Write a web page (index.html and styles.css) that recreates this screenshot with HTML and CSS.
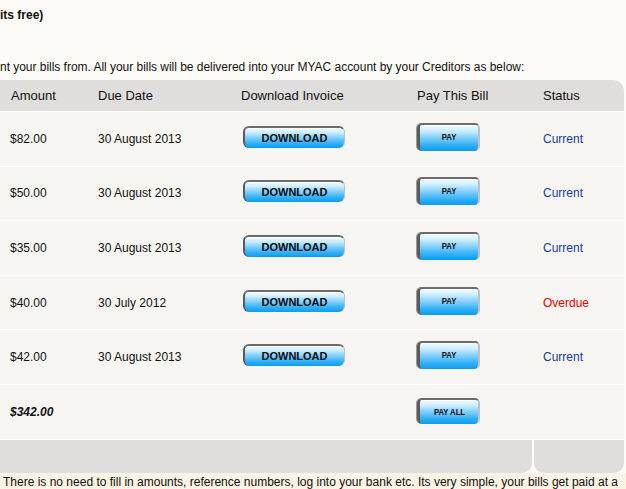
FILE: index.html
```html
<!DOCTYPE html>
<html lang="en">
<head>
<meta charset="utf-8">
<title>MYAC – Your Bills</title>
<link rel="stylesheet" href="styles.css">
</head>
<body>
<div class="panel">
  <p class="title">its free)</p>
  <p class="intro">nt your bills from. All your bills will be delivered into your MYAC account by your Creditors as below:</p>

  <div class="bills">
    <div class="row head">
      <div class="cell c-amount">Amount</div>
      <div class="cell">Due Date</div>
      <div class="cell c-dl">Download Invoice</div>
      <div class="cell">Pay This Bill</div>
      <div class="cell">Status</div>
    </div>

    <div class="row">
      <div class="cell">$82.00</div>
      <div class="cell">30 August 2013</div>
      <div class="cell"><button class="btn btn-dl">DOWNLOAD</button></div>
      <div class="cell"><button class="btn btn-pay"><span>PAY</span></button></div>
      <div class="cell status current">Current</div>
    </div>

    <div class="row">
      <div class="cell">$50.00</div>
      <div class="cell">30 August 2013</div>
      <div class="cell"><button class="btn btn-dl">DOWNLOAD</button></div>
      <div class="cell"><button class="btn btn-pay"><span>PAY</span></button></div>
      <div class="cell status current">Current</div>
    </div>

    <div class="row">
      <div class="cell">$35.00</div>
      <div class="cell">30 August 2013</div>
      <div class="cell"><button class="btn btn-dl">DOWNLOAD</button></div>
      <div class="cell"><button class="btn btn-pay"><span>PAY</span></button></div>
      <div class="cell status current">Current</div>
    </div>

    <div class="row">
      <div class="cell">$40.00</div>
      <div class="cell">30 July 2012</div>
      <div class="cell"><button class="btn btn-dl">DOWNLOAD</button></div>
      <div class="cell"><button class="btn btn-pay"><span>PAY</span></button></div>
      <div class="cell status overdue">Overdue</div>
    </div>

    <div class="row">
      <div class="cell">$42.00</div>
      <div class="cell">30 August 2013</div>
      <div class="cell"><button class="btn btn-dl">DOWNLOAD</button></div>
      <div class="cell"><button class="btn btn-pay"><span>PAY</span></button></div>
      <div class="cell status current">Current</div>
    </div>

    <div class="row total">
      <div class="cell"><strong>$342.00</strong></div>
      <div class="cell"></div>
      <div class="cell"></div>
      <div class="cell"><button class="btn btn-pay"><span>PAY ALL</span></button></div>
      <div class="cell"></div>
    </div>

    <div class="foot">
      <div class="foot-main"></div>
      <div class="foot-side"></div>
    </div>
  </div>
</div>
<p class="note">There is no need to fill in amounts, reference numbers, log into your bank etc. Its very simple, your bills get paid at a</p>
</body>
</html>
```

FILE: styles.css
```css
html, body {
  margin: 0;
  padding: 0;
}

body {
  background: #fbf3e3;
  font-family: "Liberation Sans", Arial, Helvetica, sans-serif;
  color: #111;
  font-size: 12px;
  width: 626px;
  height: 489px;
  overflow: hidden;
}

.panel {
  background: #fdfbf7;
  padding-top: 8px;
}

.title {
  margin: 0;
  font-weight: bold;
  font-size: 12px;
  line-height: 15px;
}

.intro {
  margin: 37px 0 0;
  font-size: 12px;
  line-height: 15px;
  letter-spacing: -0.03px;
}

.bills {
  width: 624px;
  margin-top: 5px;
}

/* five columns: amount, due date, invoice, pay, status */
.row {
  display: grid;
  grid-template-columns: 88px 145px 174px 126px 91px;
  align-items: center;
  background: #f7f5f2;
  border-top: 1px solid #fff;
  height: 53.6px;
}

.cell {
  padding-left: 10px;
  white-space: nowrap;
}

.head {
  background: #dfdedc;
  border-top: none;
  height: 31px;
  font-size: 13px;
  border-top-right-radius: 11px;
}

.head .c-amount { padding-left: 11px; }
.head .c-dl { padding-left: 8px; }

.status.current { color: #1c3a9c; }
.status.overdue { color: #f20000; }

.total strong {
  font-weight: bold;
  font-style: italic;
}

/* footer bar, split under the status column */
.foot {
  display: flex;
  gap: 2px;
  border-top: 1px solid #fff;
  height: 33px;
}

.foot-main,
.foot-side {
  background: #dfdedc;
  border-bottom-left-radius: 10px;
  border-bottom-right-radius: 10px;
}

.foot-main { width: 532px; border-bottom-left-radius: 0; }
.foot-side { flex: 1; }

/* glossy blue buttons */
.btn {
  display: flex;
  align-items: center;
  justify-content: center;
  padding: 0;
  margin: 0 0 4px;
  font-family: "Liberation Sans", Arial, Helvetica, sans-serif;
  font-weight: bold;
  color: #0d0d0d;
  cursor: pointer;
  background: linear-gradient(#f4fbff 0%, #cdeeff 22%, #7fcdfb 50%, #2fb0f6 78%, #0b9bef 100%);
  border-style: solid;
  border-color: #6c6c6c #b8c3c9 #0b9bef #5b5b5b;
}

.btn-dl {
  width: 102px;
  height: 22px;
  border-width: 2px 1px 0 2px;
  border-radius: 6px;
  font-size: 11px;
  box-shadow: inset 0 1px 0 #fff;
}

.btn-pay {
  width: 63px;
  height: 28px;
  border-width: 2px 2px 0 3px;
  border-radius: 5px;
  font-size: 9.6px;
  box-shadow: inset 0 1px 0 #fff, -1px 0 0 #9a9a9a;
}

.btn-pay span {
  display: inline-block;
  transform: scaleX(0.8);
  margin-top: -3px;
}

.total .btn-pay { height: 26px; margin-bottom: 2px; }
.total .btn-pay span { margin-top: -1px; }

.note {
  margin: 0;
  padding: 2px 0 0 3px;
  font-size: 12px;
  line-height: 15px;
  white-space: nowrap;
}
```
